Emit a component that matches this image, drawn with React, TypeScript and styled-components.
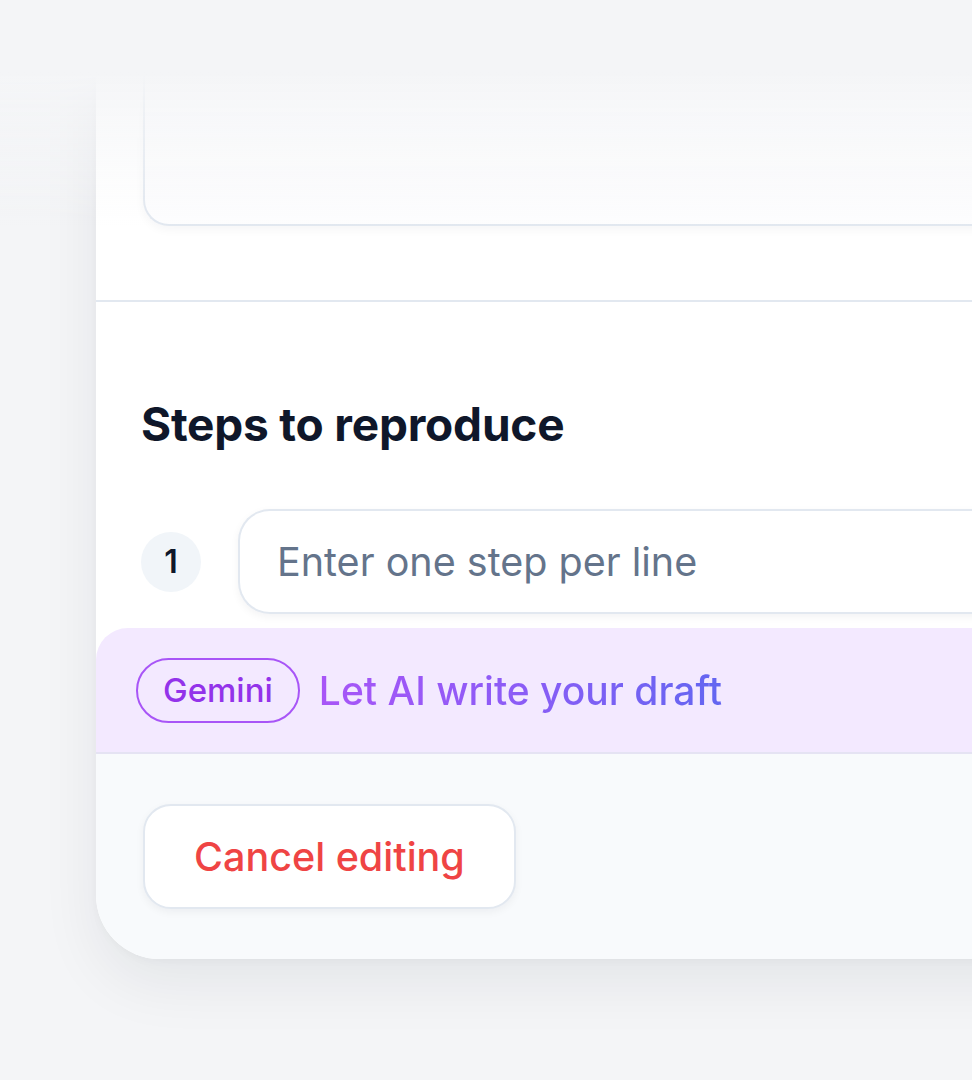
import styled, { createGlobalStyle } from "styled-components";

const GlobalStyle = createGlobalStyle`
    html, body {
        margin: 0;
        padding: 0;
        background: #f4f5f7;
        overflow: hidden;
        font-family: Inter, "Noto Sans", sans-serif;
    }
    * {
        box-sizing: border-box;
    }
`;

const Page = styled.div`
    width: 972px;
    height: 1080px;
    padding-left: 96px;
    overflow: hidden;
`;

const TopFade = styled.div`
    position: fixed;
    top: 0;
    left: 0;
    right: 0;
    height: 230px;
    pointer-events: none;
    background: linear-gradient(
        to bottom,
        #f4f5f7 0px,
        #f4f5f7 72px,
        rgba(244, 245, 247, 0.6) 120px,
        rgba(244, 245, 247, 0) 225px
    );
    z-index: 2;
`;

const Card = styled.div`
    width: 1000px;
    margin-top: -60px;
    background: #ffffff;
    border-radius: 0 0 0 64px;
    box-shadow: 0 24px 60px rgba(15, 23, 42, 0.07), 0 2px 10px rgba(15, 23, 42, 0.03);
    overflow: hidden;
`;

const TopSection = styled.div`
    padding: 0 0 74px 47px;
    border-bottom: 2px solid #e2e8f0;
`;

const DescriptionBox = styled.div`
    height: 286px;
    border: 2px solid #e2e8f0;
    border-right: none;
    border-radius: 0 0 0 26px;
    background: #fdfdfe;
    box-shadow: 0 4px 10px rgba(15, 23, 42, 0.04);
`;

const StepsSection = styled.div`
    padding: 94px 0 14px 45px;
`;

const Heading = styled.h2`
    margin: 0 0 57px;
    font-size: 46px;
    line-height: 56px;
    font-weight: 700;
    color: #0f172a;
    letter-spacing: -0.2px;
`;

const StepRow = styled.div`
    display: flex;
    align-items: center;
    gap: 37px;
`;

const StepNumber = styled.div`
    flex: none;
    width: 60px;
    height: 60px;
    border-radius: 50%;
    background: #f1f5f9;
    color: #0f172a;
    font-size: 32px;
    font-weight: 600;
    display: flex;
    align-items: center;
    justify-content: center;
`;

const StepInput = styled.input`
    flex: 1;
    height: 105px;
    padding: 0 0 0 37px;
    border: 2px solid #e2e8f0;
    border-right: none;
    border-radius: 32px 0 0 32px;
    background: #ffffff;
    font-family: Inter, "Noto Sans", sans-serif;
    font-size: 39.5px;
    color: #0f172a;
    box-shadow: 0 3px 8px rgba(15, 23, 42, 0.05);
    outline: none;

    &::placeholder {
        color: #64748b;
    }
`;

const AiBar = styled.div`
    height: 126px;
    display: flex;
    align-items: center;
    gap: 19px;
    padding-left: 40px;
    background: #f3e9ff;
    border-bottom: 2px solid #e5e3f3;
    border-radius: 32px 0 0 0;
`;

const GeminiPill = styled.span`
    height: 65px;
    padding: 0 25px;
    display: flex;
    align-items: center;
    border: 2px solid #a855f7;
    border-radius: 999px;
    color: #9333ea;
    font-size: 33px;
    font-weight: 500;
`;

const AiPrompt = styled.span`
    font-size: 39px;
    font-weight: 500;
    background: linear-gradient(90deg, #a855f7 0%, #8b5cf6 50%, #6366f1 100%);
    -webkit-background-clip: text;
    background-clip: text;
    color: transparent;
`;

const Footer = styled.div`
    background: #f8fafc;
    padding: 50px 0 50px 47px;
`;

const CancelButton = styled.button`
    height: 105px;
    padding: 0 49px;
    border: 2px solid #e2e8f0;
    border-radius: 28px;
    background: #ffffff;
    color: #ef4444;
    font-family: Inter, "Noto Sans", sans-serif;
    font-size: 39.5px;
    font-weight: 500;
    box-shadow: 0 3px 8px rgba(15, 23, 42, 0.05);
    cursor: pointer;
`;

const App = () => {
    return (
        <Page>
            <GlobalStyle />
            <TopFade />
            <Card>
                <TopSection>
                    <DescriptionBox />
                </TopSection>

                <StepsSection>
                    <Heading>Steps to reproduce</Heading>
                    <StepRow>
                        <StepNumber>1</StepNumber>
                        <StepInput placeholder="Enter one step per line" />
                    </StepRow>
                </StepsSection>

                <AiBar>
                    <GeminiPill>Gemini</GeminiPill>
                    <AiPrompt>Let AI write your draft</AiPrompt>
                </AiBar>

                <Footer>
                    <CancelButton>Cancel editing</CancelButton>
                </Footer>
            </Card>
        </Page>
    );
};

export default App;
